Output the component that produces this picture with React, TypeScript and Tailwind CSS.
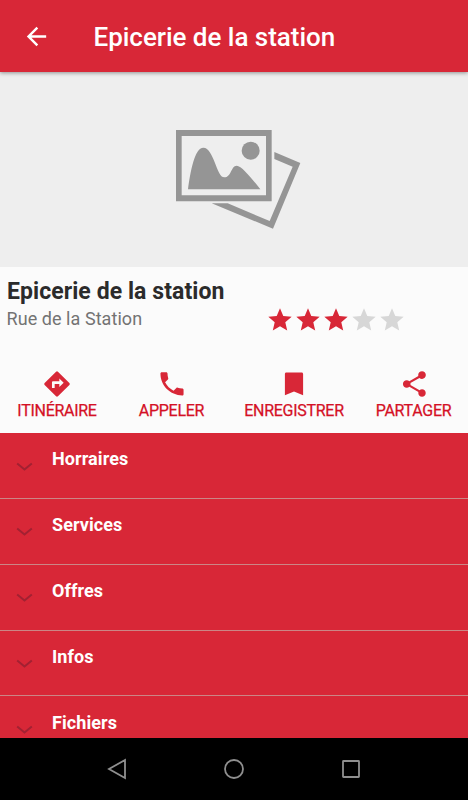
import type { ReactNode } from "react";

const sections = ["Horraires", "Services", "Offres", "Infos", "Fichiers"];

type ActionProps = {
    label: string;
    path: string;
    viewBox: string;
    className: string;
};

const actions: ActionProps[] = [
    {
        label: "ITINÉRAIRE",
        className: "w-[114px]",
        viewBox: "0 0 24 24",
        path: "M22.6 11.2l-9.8-9.8a1.1 1.1 0 0 0-1.6 0l-9.8 9.8a1.1 1.1 0 0 0 0 1.6l9.8 9.8a1.1 1.1 0 0 0 1.6 0l9.8-9.8a1.1 1.1 0 0 0 0-1.6zM14 14.5V12h-4v3.5H7.7v-4.8c0-.55.45-1 1-1H14V7.2l3.7 3.65-3.7 3.65z",
    },
    {
        label: "APPELER",
        className: "w-[115px]",
        viewBox: "1.1 1.2 21.8 21.8",
        path: "M6.62 10.79c1.44 2.83 3.76 5.14 6.59 6.59l2.2-2.2c.27-.27.67-.36 1.02-.24 1.12.37 2.33.57 3.57.57.55 0 1 .45 1 1V20c0 .55-.45 1-1 1-9.39 0-17-7.61-17-17 0-.55.45-1 1-1h3.5c.55 0 1 .45 1 1 0 1.25.2 2.45.57 3.57.11.35.03.74-.25 1.02l-2.2 2.2z",
    },
    {
        label: "ENREGISTRER",
        className: "w-[130px]",
        viewBox: "0 0 24 24",
        path: "M18.6 2.2H5.4c-.7 0-1.2.6-1.2 1.2V21.6l7.8-3.2 7.8 3.2V3.4c0-.6-.5-1.2-1.2-1.2z",
    },
    {
        label: "PARTAGER",
        className: "w-[109px]",
        viewBox: "0.7 1 22 22",
        path: "M18 16.08c-.76 0-1.44.3-1.96.77L8.91 12.7c.05-.23.09-.46.09-.7s-.04-.47-.09-.7l7.05-4.11c.54.5 1.25.81 2.04.81 1.66 0 3-1.34 3-3s-1.34-3-3-3-3 1.34-3 3c0 .24.04.47.09.7L8.04 9.81C7.5 9.31 6.79 9 6 9c-1.66 0-3 1.34-3 3s1.34 3 3 3c.79 0 1.5-.31 2.04-.81l7.12 4.16c-.05.21-.08.43-.08.65 0 1.61 1.31 2.92 2.92 2.92 1.61 0 2.92-1.31 2.92-2.92s-1.31-2.92-2.92-2.92z",
    },
];

function Action({ label, path, viewBox, className }: ActionProps) {
    return (
        <button className={`flex shrink-0 flex-col items-center text-[#d82737] ${className}`}>
            <svg width="28" height="28" viewBox={viewBox} fill="currentColor">
                <path d={path} />
            </svg>
            <span className="text-[16px] leading-[26px] tracking-[-0.28px] text-[#d41025] whitespace-nowrap [-webkit-text-stroke:0.25px_#d41025]">
                {label}
            </span>
        </button>
    );
}

function Star({ filled }: { filled: boolean }) {
    return (
        <svg width="28" height="28" viewBox="0 0 24 24" className={filled ? "text-[#d82737]" : "text-[#d7d7d7]"}>
            <path
                fill="currentColor"
                d="M12 17.27 18.18 21l-1.64-7.03L22 9.24l-7.19-.61L12 2 9.19 8.63 2 9.24l5.46 4.73L5.82 21z"
            />
        </svg>
    );
}

function Placeholder() {
    return (
        <svg width="160" height="130" viewBox="0 0 480 390" fill="#959595">
            <path fillRule="evenodd" d="M48 45H335V259H48zM65 63V241H318V63z" />
            <circle cx="272" cy="107" r="27" />
            <path d="M84 223C91 170 104 98 130 98C162 98 169 187 193 187C214 187 213 152 230 152C245 152 276 191 301 223z" />
            <path d="M343 111 421 144 339 341 155 265H203L329 318 398 155 343 132z" />
        </svg>
    );
}

function Section({ children }: { children: ReactNode }) {
    return (
        <div className="flex h-[65.85px] shrink-0 border-b border-[#cb8686] pl-4">
            <svg width="17" height="10" viewBox="0 0 17 10" className="mt-[28.5px]" fill="none" stroke="#a22132" strokeWidth="2">
                <path d="M1.2 1.4 8.5 7.5 15.8 1.4" />
            </svg>
            <h3 className="mt-[14.4px] ml-[19px] text-[18px] leading-6 font-bold tracking-[0.08px] text-white">{children}</h3>
        </div>
    );
}

export default function App() {
    return (
        <div className="flex h-[800px] w-[468px] flex-col overflow-hidden bg-[#fbfbfb] font-[Roboto,sans-serif]">
            <header className="z-10 flex h-[72px] shrink-0 items-center bg-[#d82737] pl-[22px] shadow-[0_1px_4px_rgba(0,0,0,0.4)]">
                <svg width="29" height="29" viewBox="0 0 24 24" fill="#fff">
                    <path d="M20 11H7.83l5.59-5.59L12 4l-8 8 8 8 1.41-1.41L7.83 13H20v-2z" />
                </svg>
                <h1 className="mt-0.5 ml-[42.5px] text-[26px] leading-8 font-medium tracking-[-0.03px] text-white">
                    Epicerie de la station
                </h1>
            </header>

            <div className="h-[195px] shrink-0 bg-[#eeeeee] pt-[43px] pl-40">
                <Placeholder />
            </div>

            <div className="flex h-[101px] shrink-0 pt-[11px] pl-1.5">
                <div className="w-[260px]">
                    <h2 className="pl-px text-[23px] leading-7 font-bold tracking-[0.07px] text-[#2b2b2b]">Epicerie de la station</h2>
                    <p className="-mt-px pl-[0.5px] text-[18px] leading-7 tracking-[0.06px] text-[#737373]">Rue de la Station</p>
                </div>
                <div className="mt-7 flex">
                    {[1, 2, 3, 4, 5].map((n) => (
                        <Star key={n} filled={n <= 3} />
                    ))}
                </div>
            </div>

            <div className="flex h-[65px] shrink-0 items-start pt-[1.6px]">
                {actions.map((action) => (
                    <Action key={action.label} {...action} />
                ))}
            </div>

            <main className="flex h-[305px] shrink-0 flex-col overflow-hidden bg-[#d82737]">
                {sections.map((name) => (
                    <Section key={name}>{name}</Section>
                ))}
            </main>

            <nav className="flex h-[62px] shrink-0 items-center justify-center gap-[97px] bg-black">
                <svg width="20" height="22" viewBox="0 0 20 22" fill="none" stroke="#8f8f8f" strokeWidth="1.8">
                    <path d="M18 2V20L2 11z" />
                </svg>
                <svg width="20" height="22" viewBox="0 0 20 22" fill="none" stroke="#8f8f8f" strokeWidth="1.8">
                    <circle cx="10" cy="11" r="9" />
                </svg>
                <svg width="20" height="22" viewBox="0 0 20 22" fill="none" stroke="#8f8f8f" strokeWidth="1.8">
                    <rect x="2" y="3" width="16" height="16" rx="0.5" />
                </svg>
            </nav>
        </div>
    );
}
